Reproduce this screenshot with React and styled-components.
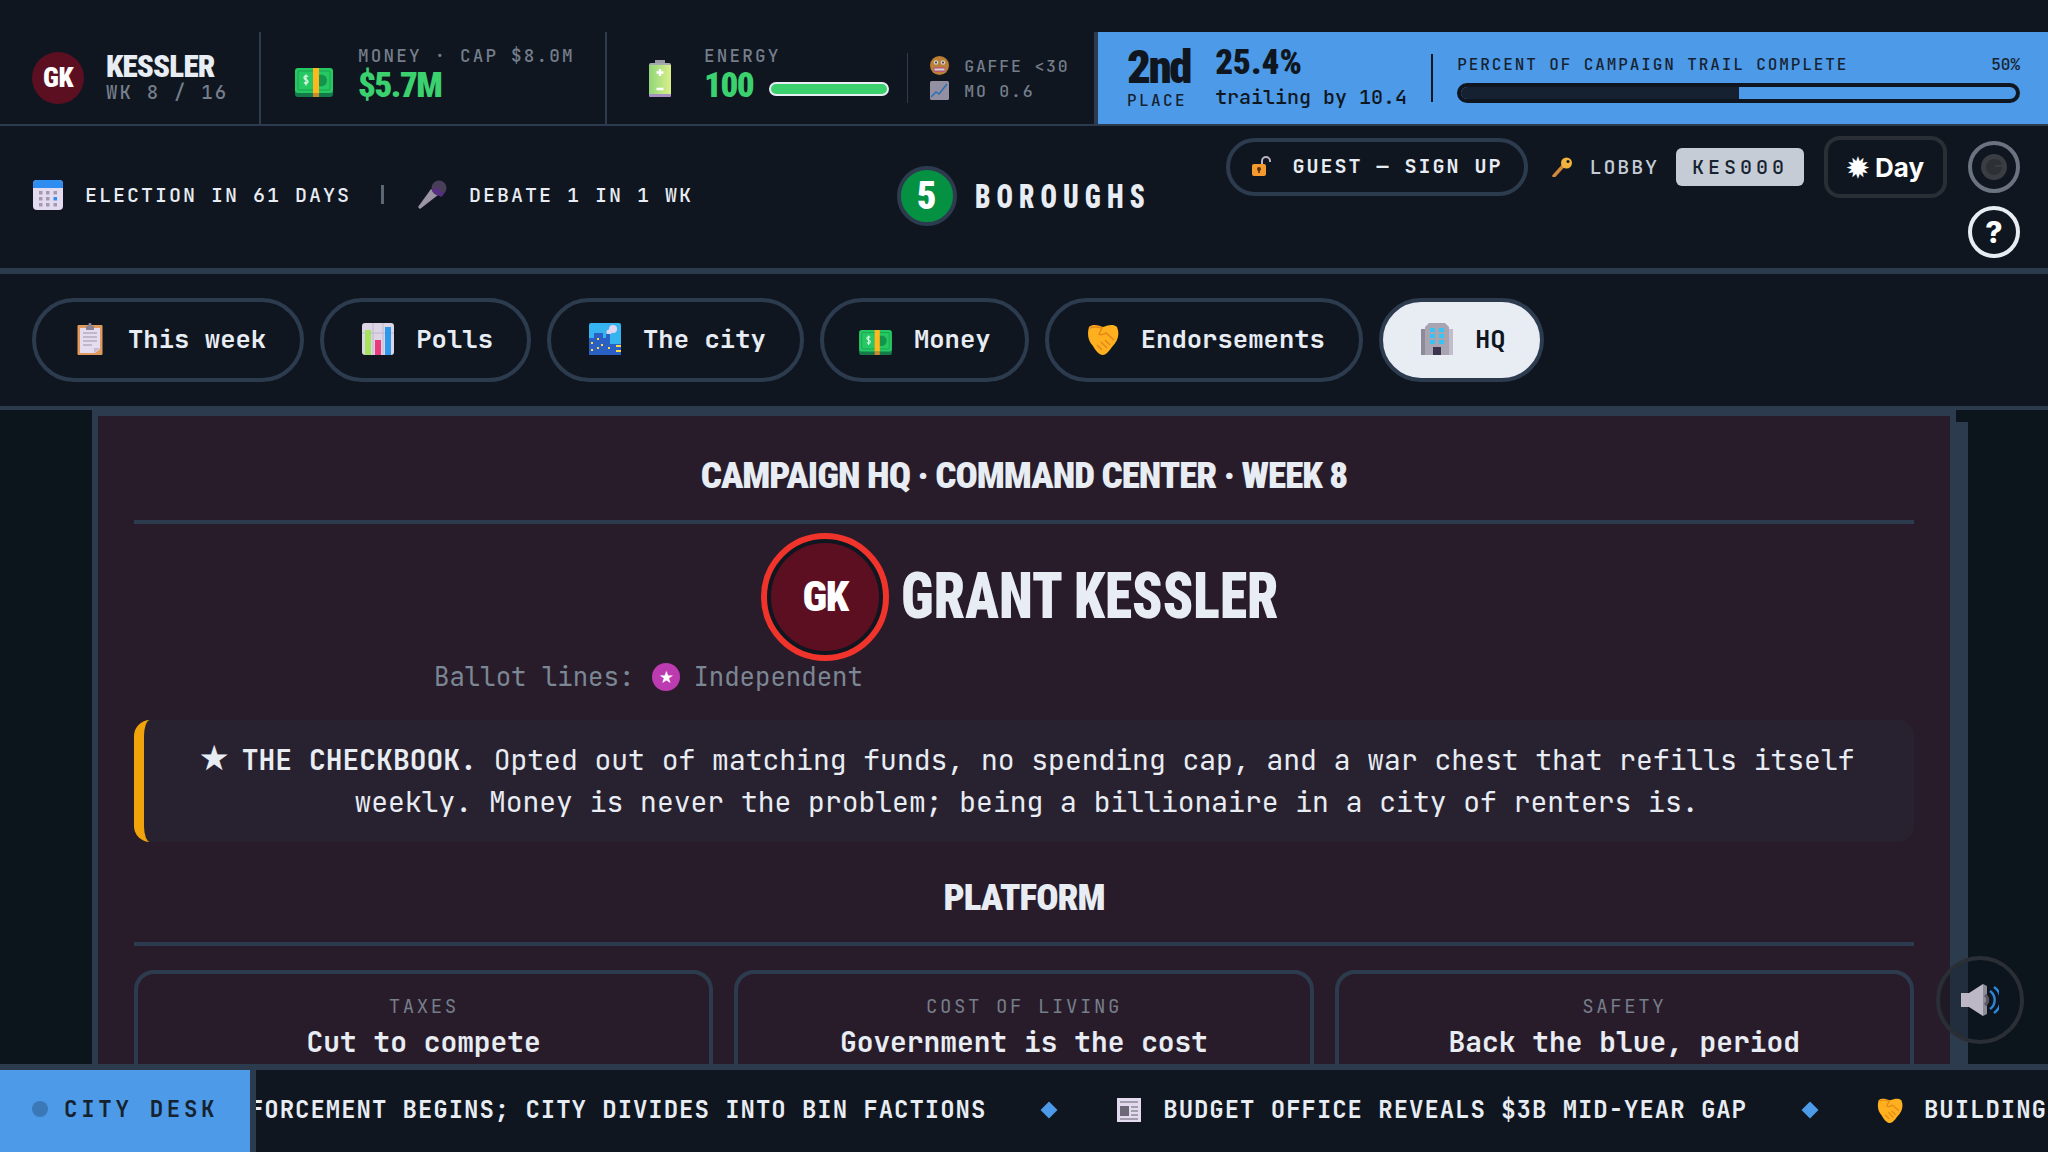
import React from 'react';
import styled, { createGlobalStyle } from 'styled-components';

const mono = `"JetBrains Mono", "DejaVu Sans Mono", "Liberation Mono", monospace`;
const display = `"Roboto", "Liberation Sans", sans-serif`;
const line = '#2d3b4f';
const ink = '#e8ecf3';
const blue = '#4d9ae8';
const bg = '#0f1620';
const dark = '#16222f';

const GlobalStyle = createGlobalStyle`
  html, body { margin: 0; padding: 0; background: ${bg}; }
  body { font-family: ${mono}; color: ${ink}; overflow: hidden; }
  * { box-sizing: border-box; }
`;

const Page = styled.div`
  height: 1152px;
  display: flex;
  flex-direction: column;
  padding-top: 32px;
  position: relative;
  overflow: hidden;
`;

const Heavy = styled.div`
  font-family: ${display};
  font-stretch: 75%;
  font-weight: 900;
  white-space: nowrap;
`;

const IconSvg = styled.svg`
  width: ${p => p.$w}px;
  height: ${p => p.$h}px;
  flex: none;
  margin-top: ${p => p.$mt || 0}px;
  margin-left: ${p => p.$ml || 0}px;
  opacity: ${p => p.$dim || 1};
`;

/* drawings of the emoji set that the game uses */
const Cash = p => (
  <IconSvg viewBox="0 0 38 29" $w={38} $h={29} {...p}>
    <rect y="4" width="38" height="25" rx="3" fill="#157a4a" />
    <rect width="38" height="25" rx="3" fill="#25c862" />
    <rect x="3" y="3" width="32" height="19" rx="1" fill="none" stroke="#1aa24f" />
    <circle cx="26" cy="12.5" r="6" fill="#14934a" />
    <rect x="18" width="6" height="25" fill="#ffb61f" />
    <rect x="18" y="25" width="6" height="4" fill="#c98a2e" />
    <path d="M13 8.5c-1-1-4-1-4 1.2 0 2.400 4 1.500 4 3.800 0 2.200-3 2.200-4 1M11 6.500v11" fill="none" stroke="#dff5e6" strokeWidth="1.300" />
  </IconSvg>
);

const Battery = p => (
  <IconSvg viewBox="0 0 22 37" $w={22} $h={37} {...p}>
    <defs>
      <linearGradient id="batt" x1="0" x2="1" y1="0" y2="0">
        <stop offset="0" stopColor="#8fd67a" />
        <stop offset="1" stopColor="#dbf08a" />
      </linearGradient>
    </defs>
    <path d="M6 0h10v4h-10z" fill="#9a9aa2" />
    <path d="M2 3h18a2 2 0 0 1 2 2v1h-22v-1a2 2 0 0 1 2-2z" fill="#a9a9b0" />
    <rect y="5" width="22" height="30" fill="url(#batt)" />
    <rect y="34" width="22" height="3" rx="1" fill="#a78fc2" />
    <path d="M11 9v7M7.500 12.500h7M7.500 29h7" stroke="#fff" strokeWidth="2.400" />
  </IconSvg>
);

const Grimace = p => (
  <IconSvg viewBox="0 0 19 19" $w={19} $h={19} {...p}>
    <circle cx="9.500" cy="9.500" r="9.500" fill="#e89a3c" />
    <circle cx="6" cy="6.500" r="2.300" fill="#fff" />
    <circle cx="13" cy="6.500" r="2.300" fill="#fff" />
    <circle cx="6" cy="6.500" r="1" fill="#5a3a20" />
    <circle cx="13" cy="6.500" r="1" fill="#5a3a20" />
    <rect x="3.500" y="11" width="12" height="5" rx="2" fill="#e46a8c" />
    <rect x="4.500" y="12.500" width="10" height="2" fill="#fff" />
  </IconSvg>
);

const Trend = p => (
  <IconSvg viewBox="0 0 19 19" $w={19} $h={19} {...p}>
    <rect width="19" height="19" rx="1.500" fill="#b6afc4" />
    <path d="M1 16l5-5 3 2 8-10" fill="none" stroke="#2f86d8" strokeWidth="1.500" />
  </IconSvg>
);

const Calendar = p => (
  <IconSvg viewBox="0 0 30 30" $w={30} $h={30} {...p}>
    <rect width="30" height="30" rx="4" fill="#e4dbf0" />
    <path d="M0 8v-4a4 4 0 0 1 4-4h22a4 4 0 0 1 4 4v4z" fill="#2f8df2" />
    <g fill="#a29bb0">
      <rect x="6" y="11" width="3.500" height="3.500" /><rect x="13" y="11" width="3.500" height="3.500" /><rect x="20.500" y="11" width="3.500" height="3.500" />
      <rect x="6" y="17" width="3.500" height="3.500" /><rect x="13" y="17" width="3.500" height="3.500" />
      <rect x="6" y="23" width="3.500" height="3.500" /><rect x="13" y="23" width="3.500" height="3.500" /><rect x="20.500" y="23" width="3.500" height="3.500" />
    </g>
    <rect x="20.500" y="17" width="3.500" height="3.500" fill="#2f8df2" />
  </IconSvg>
);

const Mic = p => (
  <IconSvg viewBox="0 0 30 30" $w={30} $h={30} {...p}>
    <path d="M3 29l-2-2 13-18 7 6z" fill="#9c95a6" />
    <circle cx="22" cy="8" r="7.500" fill="#4a3f58" />
    <path d="M15 11l9 6 3-3-9-7z" fill="#5a2d88" />
  </IconSvg>
);

const OpenLock = p => (
  <IconSvg viewBox="0 0 20 20" $w={20} $h={20} {...p}>
    <path d="M10 9v-4a4 4 0 0 1 8 0v1" fill="none" stroke="#b9b2c2" strokeWidth="2" />
    <rect y="8" width="14" height="12" rx="2" fill="#f59a2e" />
    <circle cx="7" cy="13" r="2" fill="#5a3216" />
    <rect x="6.200" y="13" width="1.600" height="4" fill="#5a3216" />
  </IconSvg>
);

const KeyIcon = p => (
  <IconSvg viewBox="0 0 21 20" $w={21} $h={20} {...p}>
    <path d="M2 19l9-10" stroke="#d1883a" strokeWidth="3.400" strokeLinecap="round" />
    <circle cx="14.500" cy="6" r="5.500" fill="#f0b43c" />
    <circle cx="16" cy="4.500" r="1.500" fill="#0f1620" />
  </IconSvg>
);

const Moon = p => (
  <IconSvg viewBox="0 0 28 28" $w={28} $h={28} {...p}>
    <circle cx="14" cy="14" r="13" fill="#3a3d42" />
    <path d="M14 6a8 8 0 1 0 8 8h-7v-2h7a8 8 0 0 0-8-6z" fill="#2d3034" />
  </IconSvg>
);

const Clipboard = p => (
  <IconSvg viewBox="0 0 32 32" $w={32} $h={32} {...p}>
    <rect x="3.500" y="2" width="25" height="30" rx="1" fill="#e09a5d" />
    <path d="M6 5h20v21l-5 4h-15z" fill="#e6dcf0" />
    <path d="M26 25l-6 0v5z" fill="#c5b8d4" />
    <path d="M12 3h2l1-3h2l1 3h2v4h-8z" fill="#8b8494" />
    <path d="M9 10h14M9 14h14M9 18h14M9 22h9" stroke="#9c94a8" strokeWidth="1" />
  </IconSvg>
);

const Bars = p => (
  <IconSvg viewBox="0 0 32 32" $w={32} $h={32} {...p}>
    <rect width="32" height="32" rx="3" fill="#dcd5e6" />
    <path d="M0 10h32M11 0v32M21 0v32" stroke="#bfb8ca" strokeWidth="1" />
    <rect x="3" y="7" width="6" height="25" fill="#a6e35c" />
    <rect x="13" y="17" width="6" height="15" fill="#ea3a7c" />
    <rect x="23" y="4" width="6" height="28" fill="#2f98ee" />
  </IconSvg>
);

const City = p => (
  <IconSvg viewBox="0 0 32 32" $w={32} $h={32} {...p}>
    <rect width="32" height="32" rx="2" fill="#35b4f0" />
    <circle cx="24" cy="6" r="4" fill="#e2d5f0" />
    <circle cx="20" cy="9" r="2.500" fill="#e2d5f0" />
    <path d="M0 32v-17h5v-5h9v5h3v-4h4v10h11v11z" fill="#2a5fc4" />
    <g fill="#ffd84a">
      <rect x="2" y="19" width="2" height="2" /><rect x="8" y="15" width="2" height="2" /><rect x="12" y="21" width="2" height="2" />
      <rect x="2" y="26" width="2" height="2" /><rect x="8" y="24" width="2" height="2" /><rect x="19" y="24" width="2" height="2" />
      <rect x="27" y="22" width="5" height="2" /><rect x="27" y="27" width="5" height="2" />
    </g>
  </IconSvg>
);

const Shake = p => (
  <IconSvg viewBox="0 0 32 32" $w={32} $h={32} {...p}>
    <path d="M2 4c4-3 8-2 14 0 6-2 10-3 14 0 3 7 1 14-5 20-3 4-6 8-9 8-4 0-8-5-10-9-5-5-6-12-4-19z" fill="#ffb01f" />
    <path d="M3 5c4-2 8-1 12 0l-3 6c2 2 5 0 7-1l8 7" fill="none" stroke="#e5861a" strokeWidth="1.500" />
    <path d="M10 22l5 5M14 19l6 6M18 17l5 5" stroke="#e5861a" strokeWidth="1.500" />
  </IconSvg>
);

const Office = p => (
  <IconSvg viewBox="0 0 32 32" $w={32} $h={32} {...p}>
    <rect x="0" y="6" width="4" height="26" fill="#8f8a98" />
    <rect x="28" y="6" width="4" height="26" fill="#c2bdca" />
    <path d="M4 4l4-4h16l4 4v28h-24z" fill="#a9a4b2" />
    <g fill="#36c3f5">
      <rect x="9" y="5" width="5" height="4" /><rect x="18" y="5" width="5" height="4" />
      <rect x="9" y="11" width="5" height="4" /><rect x="18" y="11" width="5" height="4" />
      <rect x="9" y="17" width="5" height="4" /><rect x="18" y="17" width="5" height="4" />
    </g>
    <rect x="12" y="24" width="8" height="8" fill="#3d3350" />
  </IconSvg>
);

const Paper = p => (
  <IconSvg viewBox="0 0 26 26" $w={26} $h={26} {...p}>
    <rect x="1" y="1" width="24" height="24" fill="#e3daf0" />
    <path d="M4 5h18M15 10h7M15 14h7M15 18h7M4 22h18" stroke="#8f8a98" strokeWidth="1.600" />
    <rect x="4" y="9" width="9" height="10" fill="#6d6878" />
  </IconSvg>
);

const Speaker = p => (
  <IconSvg viewBox="0 0 38 32" $w={38} $h={32} {...p}>
    <path d="M0 9h8l14-9v32l-14-9h-8z" fill="#bdb8c6" />
    <path d="M22 0l4 2v28l-4 2z" fill="#8f8a98" />
    <path d="M24 11a6 6 0 0 1 0 10" fill="none" stroke="#5a5664" strokeWidth="3" />
    <path d="M29 7a11 11 0 0 1 0 18M33 3a16 16 0 0 1 0 26" fill="none" stroke="#2f86d8" strokeWidth="2.400" />
  </IconSvg>
);

const StatsBar = styled.header`
  display: flex;
  height: 94px;
  flex: none;
  border-bottom: 2px solid ${line};
`;

const Segment = styled.div`
  width: ${p => p.$w}px;
  flex: none;
  display: flex;
  align-items: center;
  gap: ${p => p.$gap}px;
  padding-left: ${p => p.$pad}px;
  border-right: 2px solid ${line};
`;

const Avatar = styled(Heavy)`
  width: 52px;
  height: 52px;
  border-radius: 50%;
  background: #5c0f20;
  display: flex;
  align-items: center;
  justify-content: center;
  color: #fff;
  font-size: 27px;
  letter-spacing: -0.5px;
  flex: none;
`;

const Stack = styled.div`
  display: flex;
  flex-direction: column;
  padding-bottom: ${p => p.$pb || 0}px;
  margin-left: ${p => p.$ml || 0}px;
`;

const DisplayName = styled(Heavy)`
  font-size: 31px;
  line-height: 30px;
  letter-spacing: -0.8px;
`;

const Tiny = styled.div`
  font-size: ${p => p.$size || 17.6}px;
  letter-spacing: ${p => p.$ls || 2.2}px;
  color: #757e8b;
  line-height: ${p => p.$lh || 22}px;
  white-space: nowrap;
  font-weight: 500;
`;

const BigValue = styled(Heavy)`
  font-size: 35px;
  line-height: 38px;
  letter-spacing: -1.5px;
  color: #3bd16f;
`;

const EnergyRow = styled.div`
  display: flex;
  align-items: center;
  gap: 16px;
`;

const EnergyBar = styled.div`
  width: 120px;
  height: 14px;
  margin-top: 6px;
  border: 2px solid ${ink};
  border-radius: 7px;
  background: #3bd16f;
`;

const Minor = styled.div`
  margin-left: -15px;
  padding-left: 22px;
  height: 50px;
  border-left: 1px solid ${line};
  display: flex;
  flex-direction: column;
  justify-content: center;
  gap: 3px;
`;

const MinorRow = styled.div`
  display: flex;
  align-items: center;
  gap: 15px;
`;

const StandingPanel = styled.div`
  flex: 1;
  background: ${blue};
  border-left: 2px solid ${line};
  display: flex;
  align-items: center;
  padding: 0 28px 0 29px;
  color: ${bg};
`;

const Place = styled(Heavy)`
  font-size: 47px;
  line-height: 46px;
  letter-spacing: -2.5px;
`;

const Percent = styled(Heavy)`
  font-size: 35px;
  line-height: 38px;
`;

const Trailing = styled.div`
  font-size: 20px;
  font-weight: 500;
  line-height: 30px;
  white-space: nowrap;
`;

const SmallDark = styled.div`
  font-size: 16px;
  font-weight: 500;
  letter-spacing: ${p => p.$ls ?? 1.9}px;
  line-height: 22px;
  color: ${dark};
  white-space: nowrap;
`;

const VRule = styled.div`
  width: 2px;
  height: 48px;
  background: ${bg};
  margin: 0 24px;
`;

const TrailBox = styled.div`
  flex: 1;
  display: flex;
  flex-direction: column;
  gap: 7px;
`;

const TrailHead = styled.div`
  display: flex;
  justify-content: space-between;
`;

const TrailBar = styled.div`
  height: 20px;
  border: 4px solid ${bg};
  border-radius: 10px;
  overflow: hidden;
`;

const TrailFill = styled.div`
  height: 100%;
  background: #152030;
`;

const InfoBar = styled.div`
  height: 148px;
  flex: none;
  display: grid;
  grid-template-columns: 1fr auto 1fr;
  border-bottom: 6px solid ${line};
`;

const Dates = styled.div`
  display: flex;
  align-items: center;
  gap: 22px;
  padding: 0 0 5px 33px;
  font-size: 20px;
  font-weight: 500;
  letter-spacing: 2px;
  white-space: nowrap;
`;

const Pipe = styled.span`
  width: 3px;
  height: 19px;
  background: #5d6673;
  margin: 0 11px 0 8px;
`;

const Brand = styled.div`
  display: flex;
  align-items: center;
  gap: 18px;
  padding-bottom: 2px;
`;

const BrandBadge = styled(Heavy)`
  width: 60px;
  height: 60px;
  border-radius: 50%;
  background: #059142;
  border: 4px solid ${line};
  display: flex;
  align-items: center;
  justify-content: center;
  font-size: 38px;
  color: #fff;
`;

const BrandName = styled(Heavy)`
  font-size: 34px;
  letter-spacing: 7.6px;
  transform: scaleX(0.8);
  transform-origin: left center;
  margin-right: -43px;
`;

const Controls = styled.div`
  display: flex;
  flex-direction: column;
  align-items: flex-end;
  padding: 10px 28px 0 0;
  gap: 8px;
`;

const ControlRow = styled.div`
  display: flex;
  align-items: center;
`;

const GuestPill = styled.div`
  width: 302px;
  height: 58px;
  border: 4px solid ${line};
  border-radius: 29px;
  display: flex;
  align-items: center;
  gap: 21px;
  padding: 0 0 2px 22px;
  font-size: 20px;
  font-weight: 700;
  letter-spacing: 2px;
  white-space: nowrap;
`;

const Lobby = styled.div`
  display: flex;
  align-items: center;
  gap: 17px;
  margin-left: 24px;
  font-size: 20px;
  font-weight: 500;
  letter-spacing: 1.9px;
  color: #c5ccd6;
`;

const LobbyCode = styled.div`
  width: 128px;
  height: 38px;
  border-radius: 6px;
  background: #c5ccd6;
  color: ${dark};
  display: flex;
  align-items: center;
  justify-content: center;
  letter-spacing: 4px;
`;

const DayButton = styled.div`
  width: 123px;
  height: 62px;
  margin-left: 20px;
  border: 4px solid #2a2f36;
  border-radius: 16px;
  display: flex;
  align-items: center;
  justify-content: center;
  gap: 6px;
  font-family: "Inter", sans-serif;
  font-weight: 700;
  font-size: 26px;
  color: #fff;
`;

const RoundButton = styled.div`
  width: 52px;
  height: 52px;
  margin-left: ${p => p.$ml || 0}px;
  border-radius: 50%;
  border: 4px solid ${p => p.$color};
  display: flex;
  align-items: center;
  justify-content: center;
  font-family: "Inter", sans-serif;
  font-weight: 800;
  font-size: 30px;
  color: #fff;
`;

const Nav = styled.nav`
  height: 136px;
  flex: none;
  display: flex;
  align-items: flex-start;
  gap: 16px;
  padding: 24px 32px 0;
  border-bottom: 4px solid ${line};
`;

const Tab = styled.div`
  height: 84px;
  padding: 0 34px 2px 38px;
  border: 4px solid ${line};
  border-radius: 42px;
  display: flex;
  align-items: center;
  gap: 22px;
  font-size: 25.6px;
  font-weight: 600;
  white-space: nowrap;
  background: ${p => (p.$active ? ink : 'transparent')};
  color: ${p => (p.$active ? bg : ink)};
`;

const Main = styled.main`
  flex: 1;
  min-height: 0;
  background: #0c141c;
  padding: 0 92px;
  overflow: hidden;
`;

const Panel = styled.section`
  height: 100%;
  background: #291c2a;
  border: 6px solid ${line};
  border-bottom: 0;
  box-shadow: 12px 12px 0 ${line};
  padding: 0 36px;
  overflow: hidden;
`;

const SectionTitle = styled(Heavy).attrs({ as: 'h2' })`
  margin: 0 0 ${p => p.$mb}px;
  height: ${p => p.$h}px;
  display: flex;
  align-items: center;
  justify-content: center;
  border-bottom: 4px solid ${line};
  padding-top: ${p => p.$pt}px;
  font-size: 37px;
  letter-spacing: -1px;
  color: ${ink};
`;

const Identity = styled.div`
  display: flex;
  align-items: center;
  justify-content: center;
  gap: 12px;
  padding-right: 7px;
`;

const Portrait = styled.div`
  width: 128px;
  height: 128px;
  border-radius: 50%;
  border: 6px solid #f0342c;
  padding: 4px;
  background: ${bg};
`;

const PortraitInner = styled(Avatar)`
  width: 100%;
  height: 100%;
  font-size: 42px;
  letter-spacing: -1.5px;
  padding-bottom: 2px;
`;

const CandidateName = styled(Heavy).attrs({ as: 'h1' })`
  margin: -2px -56px 0 0;
  font-size: 64px;
  transform: scaleX(0.868);
  transform-origin: left center;
  color: ${ink};
`;

const Ballot = styled.div`
  display: flex;
  align-items: center;
  gap: 16px;
  margin: -2px 0 0 300px;
  height: 36px;
  font-size: 25.7px;
  color: #7b8794;
`;

const PartyDot = styled.span`
  width: 28px;
  height: 28px;
  margin: 0 -3px 0 2px;
  border-radius: 50%;
  background: #bd3bb0;
  color: #fff;
  font-family: "DejaVu Sans", sans-serif;
  font-size: 17px;
  display: flex;
  align-items: center;
  justify-content: center;
`;

const Quote = styled.div`
  margin-top: 25px;
  height: 122px;
  border-left: 10px solid #f0a30a;
  border-radius: 16px;
  background: #282230;
  display: flex;
  align-items: center;
  justify-content: center;
  text-align: center;
  padding: 0 45px 0 40px;
  font-size: 28px;
  line-height: 42px;
  color: ${ink};
`;

const QuoteStar = styled.span`
  font-family: "DejaVu Sans", sans-serif;
  font-size: 35px;
  line-height: 0;
  margin-right: -5px;
`;

const CardGrid = styled.div`
  display: grid;
  grid-template-columns: repeat(3, 1fr);
  gap: 21px;
`;

const Card = styled.div`
  height: 140px;
  border: 4px solid ${line};
  border-radius: 20px;
  padding-top: 20px;
  text-align: center;
`;

const CardLabel = styled.div`
  font-size: 19px;
  letter-spacing: 2.6px;
  line-height: 26px;
  color: #757e8b;
`;

const CardValue = styled.div`
  font-size: 27.9px;
  font-weight: 700;
  line-height: 44px;
  color: ${ink};
`;

const Ticker = styled.footer`
  height: 88px;
  flex: none;
  display: flex;
  border-top: 6px solid ${line};
  background: ${bg};
`;

const DeskLabel = styled.div`
  width: 256px;
  flex: none;
  background: ${blue};
  border-right: 6px solid ${line};
  display: flex;
  align-items: center;
  gap: 16px;
  padding: 0 0 4px 32px;
  font-size: 22.4px;
  font-weight: 700;
  letter-spacing: 3.7px;
  color: ${dark};
`;

const DeskDot = styled.span`
  width: 16px;
  height: 16px;
  border-radius: 50%;
  background: #3a78b8;
`;

const TickerTrack = styled.div`
  flex: 1;
  min-width: 0;
  overflow: hidden;
  display: flex;
  align-items: center;
  padding-bottom: 3px;
  gap: 21px;
  font-size: 24px;
  font-weight: 600;
  letter-spacing: 0.96px;
  white-space: nowrap;
`;

const TickerLead = styled.span`
  margin-left: -7px;
`;

const Diamond = styled.span`
  width: 12px;
  height: 12px;
  flex: none;
  background: ${blue};
  transform: rotate(45deg);
  margin: 0 40px 0 36px;
`;

const SoundButton = styled.div`
  position: absolute;
  right: 24px;
  bottom: 108px;
  width: 88px;
  height: 88px;
  border-radius: 50%;
  border: 4px solid #2a2f36;
  background: rgba(15, 22, 32, 0.35);
  display: flex;
  align-items: center;
  justify-content: center;
`;

const tabs = [
  [<Clipboard />, 'This week'],
  [<Bars />, 'Polls'],
  [<City />, 'The city'],
  [<Cash $w={33} $h={25} $mt={6} $ml={-3} />, 'Money'],
  [<Shake />, 'Endorsements'],
  [<Office />, 'HQ'],
];

const platform = [
  ['TAXES', 'Cut to compete'],
  ['COST OF LIVING', 'Government is the cost'],
  ['SAFETY', 'Back the blue, period'],
];

const trailPct = 50;

export default function App() {
  return (
    <Page>
      <GlobalStyle />
      <StatsBar>
        <Segment $w={261} $pad={32} $gap={22}>
          <Avatar>GK</Avatar>
          <Stack>
            <DisplayName>KESSLER</DisplayName>
            <Tiny $size={19} $ls={2.2}>WK 8 / 16</Tiny>
          </Stack>
        </Segment>
        <Segment $w={346} $pad={34} $gap={25}>
          <Cash $mt={9} />
          <Stack $pb={6}>
            <Tiny>MONEY · CAP $8.0M</Tiny>
            <BigValue>$5.7M</BigValue>
          </Stack>
        </Segment>
        <Segment $w={489} $pad={42} $gap={33}>
          <Battery />
          <Stack $pb={6}>
            <Tiny>ENERGY</Tiny>
            <EnergyRow>
              <BigValue>100</BigValue>
              <EnergyBar />
            </EnergyRow>
          </Stack>
          <Minor>
            <MinorRow>
              <Grimace $dim={0.8} />
              <Tiny $size={16.5} $ls={1.8}>GAFFE &lt;30</Tiny>
            </MinorRow>
            <MinorRow>
              <Trend $dim={0.8} />
              <Tiny $size={16.5} $ls={1.8}>MO 0.6</Tiny>
            </MinorRow>
          </Minor>
        </Segment>
        <StandingPanel>
          <Stack>
            <Place>2nd</Place>
            <SmallDark $ls={2.4}>PLACE</SmallDark>
          </Stack>
          <Stack $ml={25}>
            <Percent>25.4%</Percent>
            <Trailing>trailing by 10.4</Trailing>
          </Stack>
          <VRule />
          <TrailBox>
            <TrailHead>
              <SmallDark>PERCENT OF CAMPAIGN TRAIL COMPLETE</SmallDark>
              <SmallDark $ls={0}>{trailPct}%</SmallDark>
            </TrailHead>
            <TrailBar>
              <TrailFill style={{ width: `${trailPct}%` }} />
            </TrailBar>
          </TrailBox>
        </StandingPanel>
      </StatsBar>

      <InfoBar>
        <Dates>
          <Calendar />
          <span>ELECTION IN 61 DAYS</span>
          <Pipe />
          <Mic />
          <span>DEBATE 1 IN 1 WK</span>
        </Dates>
        <Brand>
          <BrandBadge>5</BrandBadge>
          <BrandName>BOROUGHS</BrandName>
        </Brand>
        <Controls>
          <ControlRow>
            <GuestPill>
              <OpenLock />
              GUEST — SIGN UP
            </GuestPill>
            <Lobby>
              <KeyIcon />
              LOBBY
              <LobbyCode>KES000</LobbyCode>
            </Lobby>
            <DayButton><span>✹</span>Day</DayButton>
            <RoundButton $ml={21} $color="#6b7280"><Moon /></RoundButton>
          </ControlRow>
          <RoundButton $color={ink}>?</RoundButton>
        </Controls>
      </InfoBar>

      <Nav>
        {tabs.map(([icon, label], i) => (
          <Tab key={label} $active={i === tabs.length - 1}>
            {icon}
            {label}
          </Tab>
        ))}
      </Nav>

      <Main>
        <Panel>
          <SectionTitle $h={108} $pt={14} $mb={9}>CAMPAIGN HQ · COMMAND CENTER · WEEK 8</SectionTitle>
          <Identity>
            <Portrait>
              <PortraitInner>GK</PortraitInner>
            </Portrait>
            <CandidateName>GRANT KESSLER</CandidateName>
          </Identity>
          <Ballot>
            Ballot lines:
            <PartyDot>★</PartyDot>
            Independent
          </Ballot>
          <Quote>
            <div>
              <QuoteStar>★</QuoteStar> <b>THE CHECKBOOK.</b> Opted out of matching funds, no spending cap, and a war chest that refills itself weekly. Money is never the problem; being a billionaire in a city of renters is.
            </div>
          </Quote>
          <SectionTitle $h={104} $pt={10} $mb={24}>PLATFORM</SectionTitle>
          <CardGrid>
            {platform.map(([label, value]) => (
              <Card key={label}>
                <CardLabel>{label}</CardLabel>
                <CardValue>{value}</CardValue>
              </Card>
            ))}
          </CardGrid>
        </Panel>
      </Main>

      <Ticker>
        <DeskLabel><DeskDot />CITY DESK</DeskLabel>
        <TickerTrack>
          <TickerLead>FORCEMENT BEGINS; CITY DIVIDES INTO BIN FACTIONS</TickerLead>
          <Diamond />
          <Paper />
          <span>BUDGET OFFICE REVEALS $3B MID-YEAR GAP</span>
          <Diamond />
          <Shake $w={26} $h={26} />
          <span>BUILDING</span>
        </TickerTrack>
      </Ticker>

      <SoundButton><Speaker /></SoundButton>
    </Page>
  );
}
